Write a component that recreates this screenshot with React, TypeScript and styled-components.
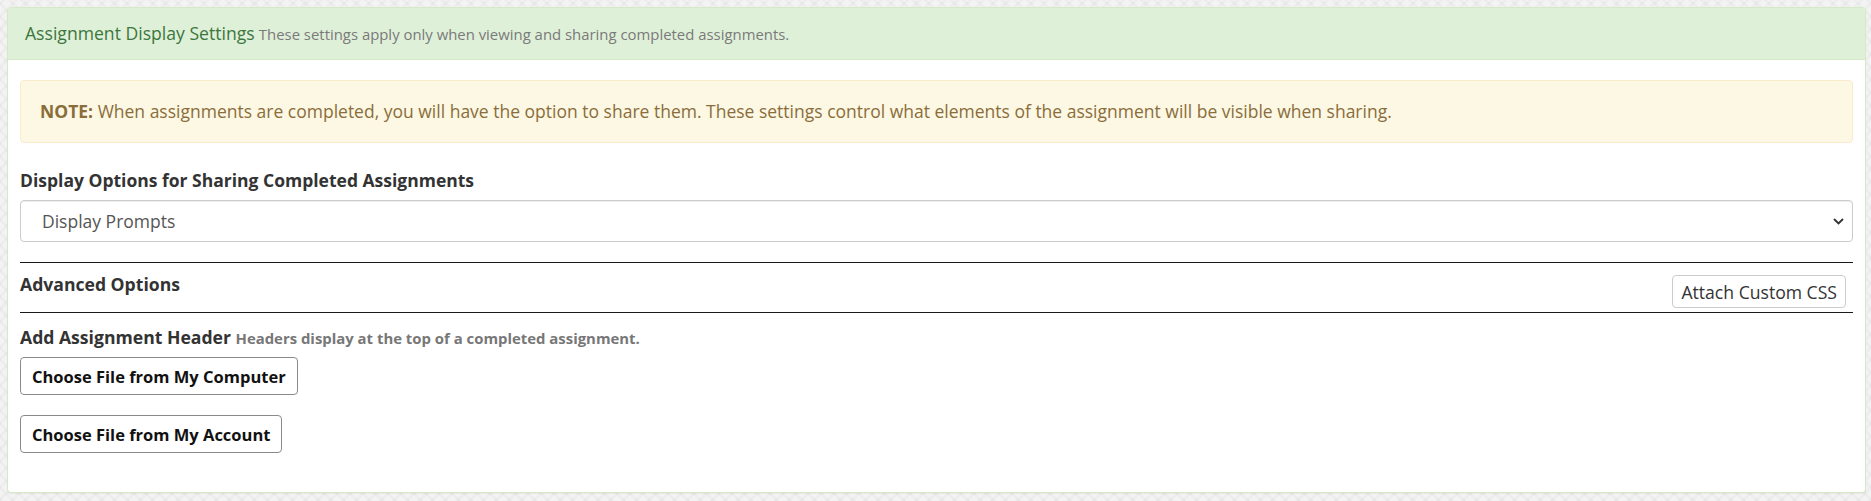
import React from "react";
import styled, { createGlobalStyle } from "styled-components";

const Global = createGlobalStyle`
  html, body {
    margin: 0;
    padding: 0;
  }
  body {
    font-family: "Open Sans", "Liberation Sans", sans-serif;
    color: #333;
    background-color: #f3f3f3;
    background-image:
      repeating-linear-gradient(45deg, rgba(0,0,0,0.022) 0 3px, transparent 3px 9px),
      repeating-linear-gradient(-45deg, rgba(0,0,0,0.022) 0 3px, transparent 3px 9px);
  }
  * { box-sizing: border-box; }
`;

const Page = styled.div`
  padding: 7px 5px 9px 7px;
`;

const Panel = styled.section`
  background: #fff;
  border: 1px solid #d6e9c6;
  border-radius: 4px;
  box-shadow: 0 1px 1px rgba(0, 0, 0, 0.05);
  overflow: hidden;
`;

const PanelHeading = styled.header`
  background: #dff0d8;
  border-bottom: 1px solid #d6e9c6;
  padding: 15px 18px 15px 17px;
  line-height: 20px;
  color: #3c763d;
`;

const PanelTitle = styled.span`
  font-size: 17.6px;
  font-weight: 400;
`;

const TitleNote = styled.small`
  font-size: 14.9px;
  color: #7a7a7a;
`;

const PanelBody = styled.div`
  padding: 20px 12px 39px 12px;
`;

const Alert = styled.div`
  background: #fcf8e3;
  border: 1px solid #faebcc;
  border-radius: 4px;
  color: #8a6d3b;
  font-size: 17.5px;
  line-height: 25px;
  padding: 18px 19px;
`;

const Label = styled.div`
  margin-top: 25px;
  font-size: 17.5px;
  line-height: 25px;
  font-weight: 700;
  color: #333;
`;

const SelectWrap = styled.div`
  position: relative;
  margin-top: 7px;
`;

const Select = styled.select`
  appearance: none;
  -webkit-appearance: none;
  width: 100%;
  height: 42px;
  padding: 0 40px 0 21px;
  font-family: "Open Sans", "Liberation Sans", sans-serif;
  font-size: 17.5px;
  color: #555;
  background: #fff;
  border: 1px solid #ccc;
  border-radius: 4px;
  box-shadow: inset 0 1px 1px rgba(0, 0, 0, 0.075);
  outline: none;
`;

const Chevron = styled.svg`
  position: absolute;
  right: 9px;
  top: 50%;
  margin-top: -3px;
  width: 11px;
  height: 7px;
  pointer-events: none;
`;

const AdvancedRow = styled.div`
  margin-top: 20px;
  border-top: 1px solid #1a1a1a;
  border-bottom: 1px solid #1a1a1a;
  height: 51px;
  display: flex;
  justify-content: space-between;
  align-items: flex-start;
`;

const SectionTitle = styled.div`
  padding-top: 11px;
  font-size: 17.6px;
  line-height: 20px;
  font-weight: 700;
  color: #333;
`;

const SmallButton = styled.button`
  margin-top: 12px;
  margin-right: 7px;
  height: 33px;
  padding: 0 8px;
  font-family: "Open Sans", "Liberation Sans", sans-serif;
  font-size: 17.6px;
  color: #333;
  background: #fff;
  border: 1px solid #ccc;
  border-radius: 4px;
  cursor: pointer;
`;

const HeaderTitle = styled.div`
  margin-top: 14px;
  font-size: 17.6px;
  line-height: 20px;
  font-weight: 700;
  color: #333;
`;

const HeaderNote = styled.small`
  font-size: 14.9px;
  font-weight: 700;
  color: #777;
`;

const ButtonStack = styled.div`
  margin-top: 9px;
  display: flex;
  flex-direction: column;
  align-items: flex-start;
  gap: 20px;
`;

const FileButton = styled.button`
  height: 38px;
  padding: 0 11px;
  font-family: "Open Sans", "Liberation Sans", sans-serif;
  font-size: 16.5px;
  font-weight: 700;
  color: #111;
  background: #fff;
  border: 1px solid #8a8a8a;
  border-radius: 4px;
  cursor: pointer;
`;

export default function App() {
  return (
    <>
      <Global />
      <Page>
        <Panel>
          <PanelHeading>
            <PanelTitle>Assignment Display Settings</PanelTitle>{" "}
            <TitleNote>These settings apply only when viewing and sharing completed assignments.</TitleNote>
          </PanelHeading>
          <PanelBody>
            <Alert>
              <strong>NOTE:</strong> When assignments are completed, you will have the option to share them. These
              settings control what elements of the assignment will be visible when sharing.
            </Alert>
            <Label>Display Options for Sharing Completed Assignments</Label>
            <SelectWrap>
              <Select defaultValue="prompts">
                <option value="prompts">Display Prompts</option>
                <option value="responses">Display Responses</option>
              </Select>
              <Chevron viewBox="0 0 11 7">
                <path d="M1 1l4.5 4.5L10 1" fill="none" stroke="#333" strokeWidth="1.8" />
              </Chevron>
            </SelectWrap>
            <AdvancedRow>
              <SectionTitle>Advanced Options</SectionTitle>
              <SmallButton>Attach Custom CSS</SmallButton>
            </AdvancedRow>
            <HeaderTitle>
              Add Assignment Header <HeaderNote>Headers display at the top of a completed assignment.</HeaderNote>
            </HeaderTitle>
            <ButtonStack>
              <FileButton>Choose File from My Computer</FileButton>
              <FileButton>Choose File from My Account</FileButton>
            </ButtonStack>
          </PanelBody>
        </Panel>
      </Page>
    </>
  );
}
